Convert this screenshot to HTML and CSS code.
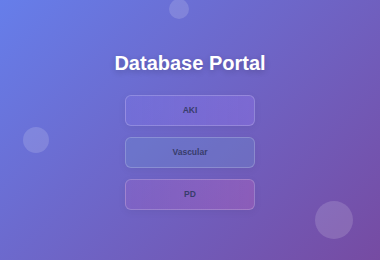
FILE: index.html
```html
<!DOCTYPE html>
<html lang="en">
<head>
    <meta charset="UTF-8">
    <title>Database Portal</title>
    <link rel="stylesheet" href="styles.css">
</head>
<body>
    <div class="bubble bubble-top"></div>
    <div class="bubble bubble-left"></div>
    <div class="bubble bubble-right"></div>
    <div class="container">
        <h1>Database Portal</h1>
        <div class="menu">
            <button class="btn btn-aki">AKI</button>
            <button class="btn btn-vascular">Vascular</button>
            <button class="btn btn-pd">PD</button>
        </div>
    </div>
</body>
</html>
```

FILE: styles.css
```css
body {
    font-family: 'Liberation Sans', Arial, sans-serif;
    background: linear-gradient(135deg, #667eea 0%, #764ba2 100%);
    display: flex;
    justify-content: center;
    align-items: center;
    height: 100vh;
    margin: 0;
    overflow: hidden;
    position: relative;
}

.container {
    display: flex;
    flex-direction: column;
    align-items: center;
    margin-top: 1px;
}

h1 {
    font-size: 20px;
    font-weight: bold;
    color: #ffffff;
    margin: 0 0 20px;
    text-shadow: 0 2px 6px rgba(0, 0, 0, 0.2);
}

.menu {
    display: flex;
    flex-direction: column;
    gap: 11px;
}

.btn {
    width: 130px;
    height: 31px;
    border-radius: 6px;
    border: 1px solid rgba(255, 255, 255, 0.2);
    font-family: inherit;
    font-size: 8.5px;
    font-weight: bold;
    color: #383d6c;
    cursor: pointer;
    box-shadow: 0 2px 8px rgba(0, 0, 0, 0.05);
}

.btn-aki {
    background: linear-gradient(90deg, rgba(130, 120, 235, 0.3), rgba(150, 120, 240, 0.35));
}

.btn-vascular {
    background: rgba(105, 145, 205, 0.3);
}

.btn-pd {
    background: linear-gradient(90deg, rgba(170, 100, 200, 0.25), rgba(200, 100, 190, 0.3));
}

.bubble {
    position: absolute;
    border-radius: 50%;
    background: rgba(255, 255, 255, 0.15);
}

.bubble-top {
    width: 20px;
    height: 20px;
    left: 169px;
    top: -1px;
}

.bubble-left {
    width: 26px;
    height: 26px;
    left: 23px;
    top: 127px;
}

.bubble-right {
    width: 38px;
    height: 38px;
    left: 315px;
    top: 201px;
}
```
